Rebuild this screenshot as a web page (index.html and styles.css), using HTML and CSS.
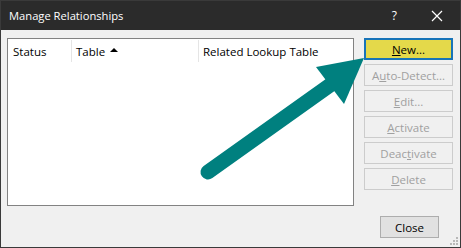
FILE: index.html
```html
<!DOCTYPE html>
<html lang="en">
<head>
    <meta charset="UTF-8">
    <title>Manage Relationships</title>
    <link rel="stylesheet" href="styles.css">
</head>
<body>

<div class="window">
    <div class="titlebar">
        <span class="title">Manage Relationships</span>
        <span class="help">?</span>
        <svg class="close-x" width="12" height="12" viewBox="0 0 12 12">
            <path d="M1 1 L11 11 M11 1 L1 11" stroke="#ffffff" stroke-width="1.2" fill="none"/>
        </svg>
    </div>

    <div class="content">
        <div class="main">
            <div class="list">
                <div class="list-header">
                    <div class="col col-status">Status</div>
                    <div class="col col-table">Table <span class="sort-up"></span></div>
                    <div class="col col-related">Related Lookup Table</div>
                </div>
            </div>

            <div class="actions">
                <button class="btn btn-default"><u>N</u>ew...</button>
                <button class="btn" disabled>A<u>u</u>to-Detect...</button>
                <button class="btn" disabled><u>E</u>dit...</button>
                <button class="btn" disabled><u>A</u>ctivate</button>
                <button class="btn" disabled>Deac<u>t</u>ivate</button>
                <button class="btn" disabled><u>D</u>elete</button>
            </div>
        </div>

        <div class="footer">
            <button class="btn btn-close">Close</button>
        </div>
    </div>

    <!-- callout arrow pointing at the New button -->
    <svg class="callout" width="461" height="248" viewBox="0 0 461 248">
        <line x1="208" y1="172" x2="333" y2="83" stroke="#00807f" stroke-width="15" stroke-linecap="round"/>
        <polygon points="316,67 364,58 344,104" fill="#00807f"/>
    </svg>

    <svg class="grip" width="8" height="8" viewBox="0 0 8 8">
        <rect x="6" y="0" width="2" height="2" fill="#b8b8b8"/>
        <rect x="3" y="3" width="2" height="2" fill="#b8b8b8"/>
        <rect x="6" y="3" width="2" height="2" fill="#b8b8b8"/>
        <rect x="0" y="6" width="2" height="2" fill="#b8b8b8"/>
        <rect x="3" y="6" width="2" height="2" fill="#b8b8b8"/>
        <rect x="6" y="6" width="2" height="2" fill="#b8b8b8"/>
    </svg>
</div>

</body>
</html>
```

FILE: styles.css
```css
/* Dialog window */
body {
    margin: 0;
    font-family: 'Open Sans', 'Noto Sans', sans-serif;
    font-size: 11.5px;
}

.window {
    position: relative;
    width: 461px;
    height: 248px;
    box-sizing: border-box;
    border: 1px solid #3a3a3a;
    background: #f0f0f0;
    overflow: hidden;
}

/* Title bar */
.titlebar {
    height: 29px;
    background: #2b2b2b;
    color: #ffffff;
    display: flex;
    align-items: center;
    padding-left: 8px;
}

.title {
    flex: 1;
    font-size: 11.2px;
}

.help {
    font-size: 12px;
    margin-right: 34px;
}

.close-x {
    margin-right: 17px;
}

/* Body */
.content {
    padding: 8px 0 0 6px;
}

.main {
    display: flex;
    gap: 10px;
}

.list {
    width: 347px;
    height: 168px;
    box-sizing: border-box;
    border: 1px solid #828282;
    background: #ffffff;
}

.list-header {
    display: flex;
    height: 22px;
    padding-top: 1px;
}

.col {
    display: flex;
    align-items: center;
    padding-left: 5px;
    box-sizing: border-box;
    border-right: 1px solid #e5e5e5;
    color: #000000;
}

.col-status {
    width: 64px;
}

.col-table {
    width: 127px;
    padding-left: 4px;
}

.col-related {
    flex: 1;
    padding-left: 4px;
    border-right: none;
}

.sort-up {
    display: inline-block;
    width: 0;
    height: 0;
    margin-left: 5px;
    margin-bottom: 2px;
    border-left: 4px solid transparent;
    border-right: 4px solid transparent;
    border-bottom: 4px solid #000000;
}

/* Buttons */
.actions {
    display: flex;
    flex-direction: column;
    gap: 4px;
    width: 89px;
}

.btn {
    height: 22px;
    box-sizing: border-box;
    border: 1px solid #adadad;
    background: #e1e1e1;
    font-family: 'Open Sans', 'Noto Sans', sans-serif;
    font-size: 11.5px;
    color: #000000;
    padding: 0;
}

.btn:disabled {
    border-color: #cccccc;
    background: #f0f0f0;
    color: #a0a0a0;
}

.btn-default {
    border: 2px solid #1874b8;
    background: #e4d94a;
}

.footer {
    display: flex;
    justify-content: flex-end;
    padding-right: 21px;
    margin-top: 10px;
}

.btn-close {
    width: 59px;
}

/* Overlays */
.callout {
    position: absolute;
    left: -1px;
    top: -1px;
    pointer-events: none;
}

.grip {
    position: absolute;
    right: 2px;
    bottom: 2px;
}
```
